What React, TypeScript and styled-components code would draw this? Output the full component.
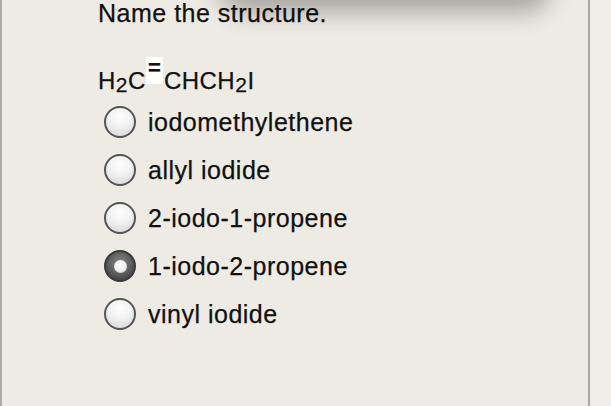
import React from 'react';
import styled, { createGlobalStyle } from 'styled-components';

const Global = createGlobalStyle`
  html, body {
    margin: 0;
    padding: 0;
    background: #eeebe4;
  }
`

const Frame = styled.div`
  position: relative;
  width: 611px;
  height: 406px;
  display: flex;
  overflow: hidden;
  background: #eeebe4;
  font-family: "Liberation Sans", Arial, sans-serif;
  color: #111;
  -webkit-text-stroke: 0.25px #111;
`

const TopShadow = styled.div`
  position: absolute;
  left: 225px;
  top: -40px;
  width: 320px;
  height: 40px;
  border-radius: 20px;
  box-shadow: 0 6px 24px 6px rgba(0, 0, 0, 0.3);
`

const Panel = styled.div`
  flex: 1;
  border-left: 2px solid #aeadaa;
  border-right: 2px solid #a8a7a4;
  padding: 0 0 0 96px;
  display: flex;
  flex-direction: column;
`

const Gutter = styled.div`
  width: 21px;
  background: #efede6;
`

const Title = styled.div`
  font-size: 25px;
  line-height: 28px;
  margin-top: -1px;
  letter-spacing: 0.5px;
`

const Formula = styled.div`
  font-size: 24px;
  line-height: 30px;
  margin-top: 39px;
  letter-spacing: 0.5px;
  display: flex;
  align-items: flex-start;
`

const Sub = styled.span`
  font-size: 21px;
  position: relative;
  top: 4px;
`

const Bond = styled.span`
  display: inline-block;
  width: 17px;
  height: 27px;
  margin: -9px 1px 0 0;
  background: #fff;
  text-align: center;
  line-height: 22px;
  font-size: 22px;
  font-weight: bold;
  letter-spacing: 0;
`

const Options = styled.div`
  display: flex;
  flex-direction: column;
  margin-top: 2px;
`

const Option = styled.label`
  display: flex;
  align-items: center;
  height: 48px;
  gap: 12px;
  font-size: 25px;
  letter-spacing: 0.5px;
  margin-left: 6px;
`

const Radio = styled.span<{ $checked?: boolean }>`
  box-sizing: border-box;
  width: 32px;
  height: 32px;
  border-radius: 50%;
  border: 2px solid ${p => (p.$checked ? '#3a3a3a' : '#555')};
  background: ${p =>
    p.$checked
      ? 'radial-gradient(circle at 50% 40%, #8a8a8a 0%, #555 60%, #2e2e2e 100%)'
      : 'radial-gradient(circle at 50% 30%, #ffffff 0%, #f1f1f1 45%, #d3d3d3 100%)'};
  display: flex;
  align-items: center;
  justify-content: center;
`

const Dot = styled.span`
  width: 13px;
  height: 13px;
  border-radius: 50%;
  background: radial-gradient(circle at 50% 35%, #ffffff 0%, #ececec 60%, #bdbdbd 100%);
`

const choices = [
  'iodomethylethene',
  'allyl iodide',
  '2-iodo-1-propene',
  '1-iodo-2-propene',
  'vinyl iodide',
]

function App() {
  return (
    <>
      <Global />
      <Frame>
        <TopShadow />
        <Panel>
          <Title>Name the structure.</Title>
          <Formula>
            H<Sub>2</Sub>C<Bond>=</Bond>CHCH<Sub>2</Sub>I
          </Formula>
          <Options>
            {choices.map((c, i) => (
              <Option key={c}>
                <Radio $checked={i === 3}>{i === 3 && <Dot />}</Radio>
                {c}
              </Option>
            ))}
          </Options>
        </Panel>
        <Gutter />
      </Frame>
    </>
  )
}

export default App
